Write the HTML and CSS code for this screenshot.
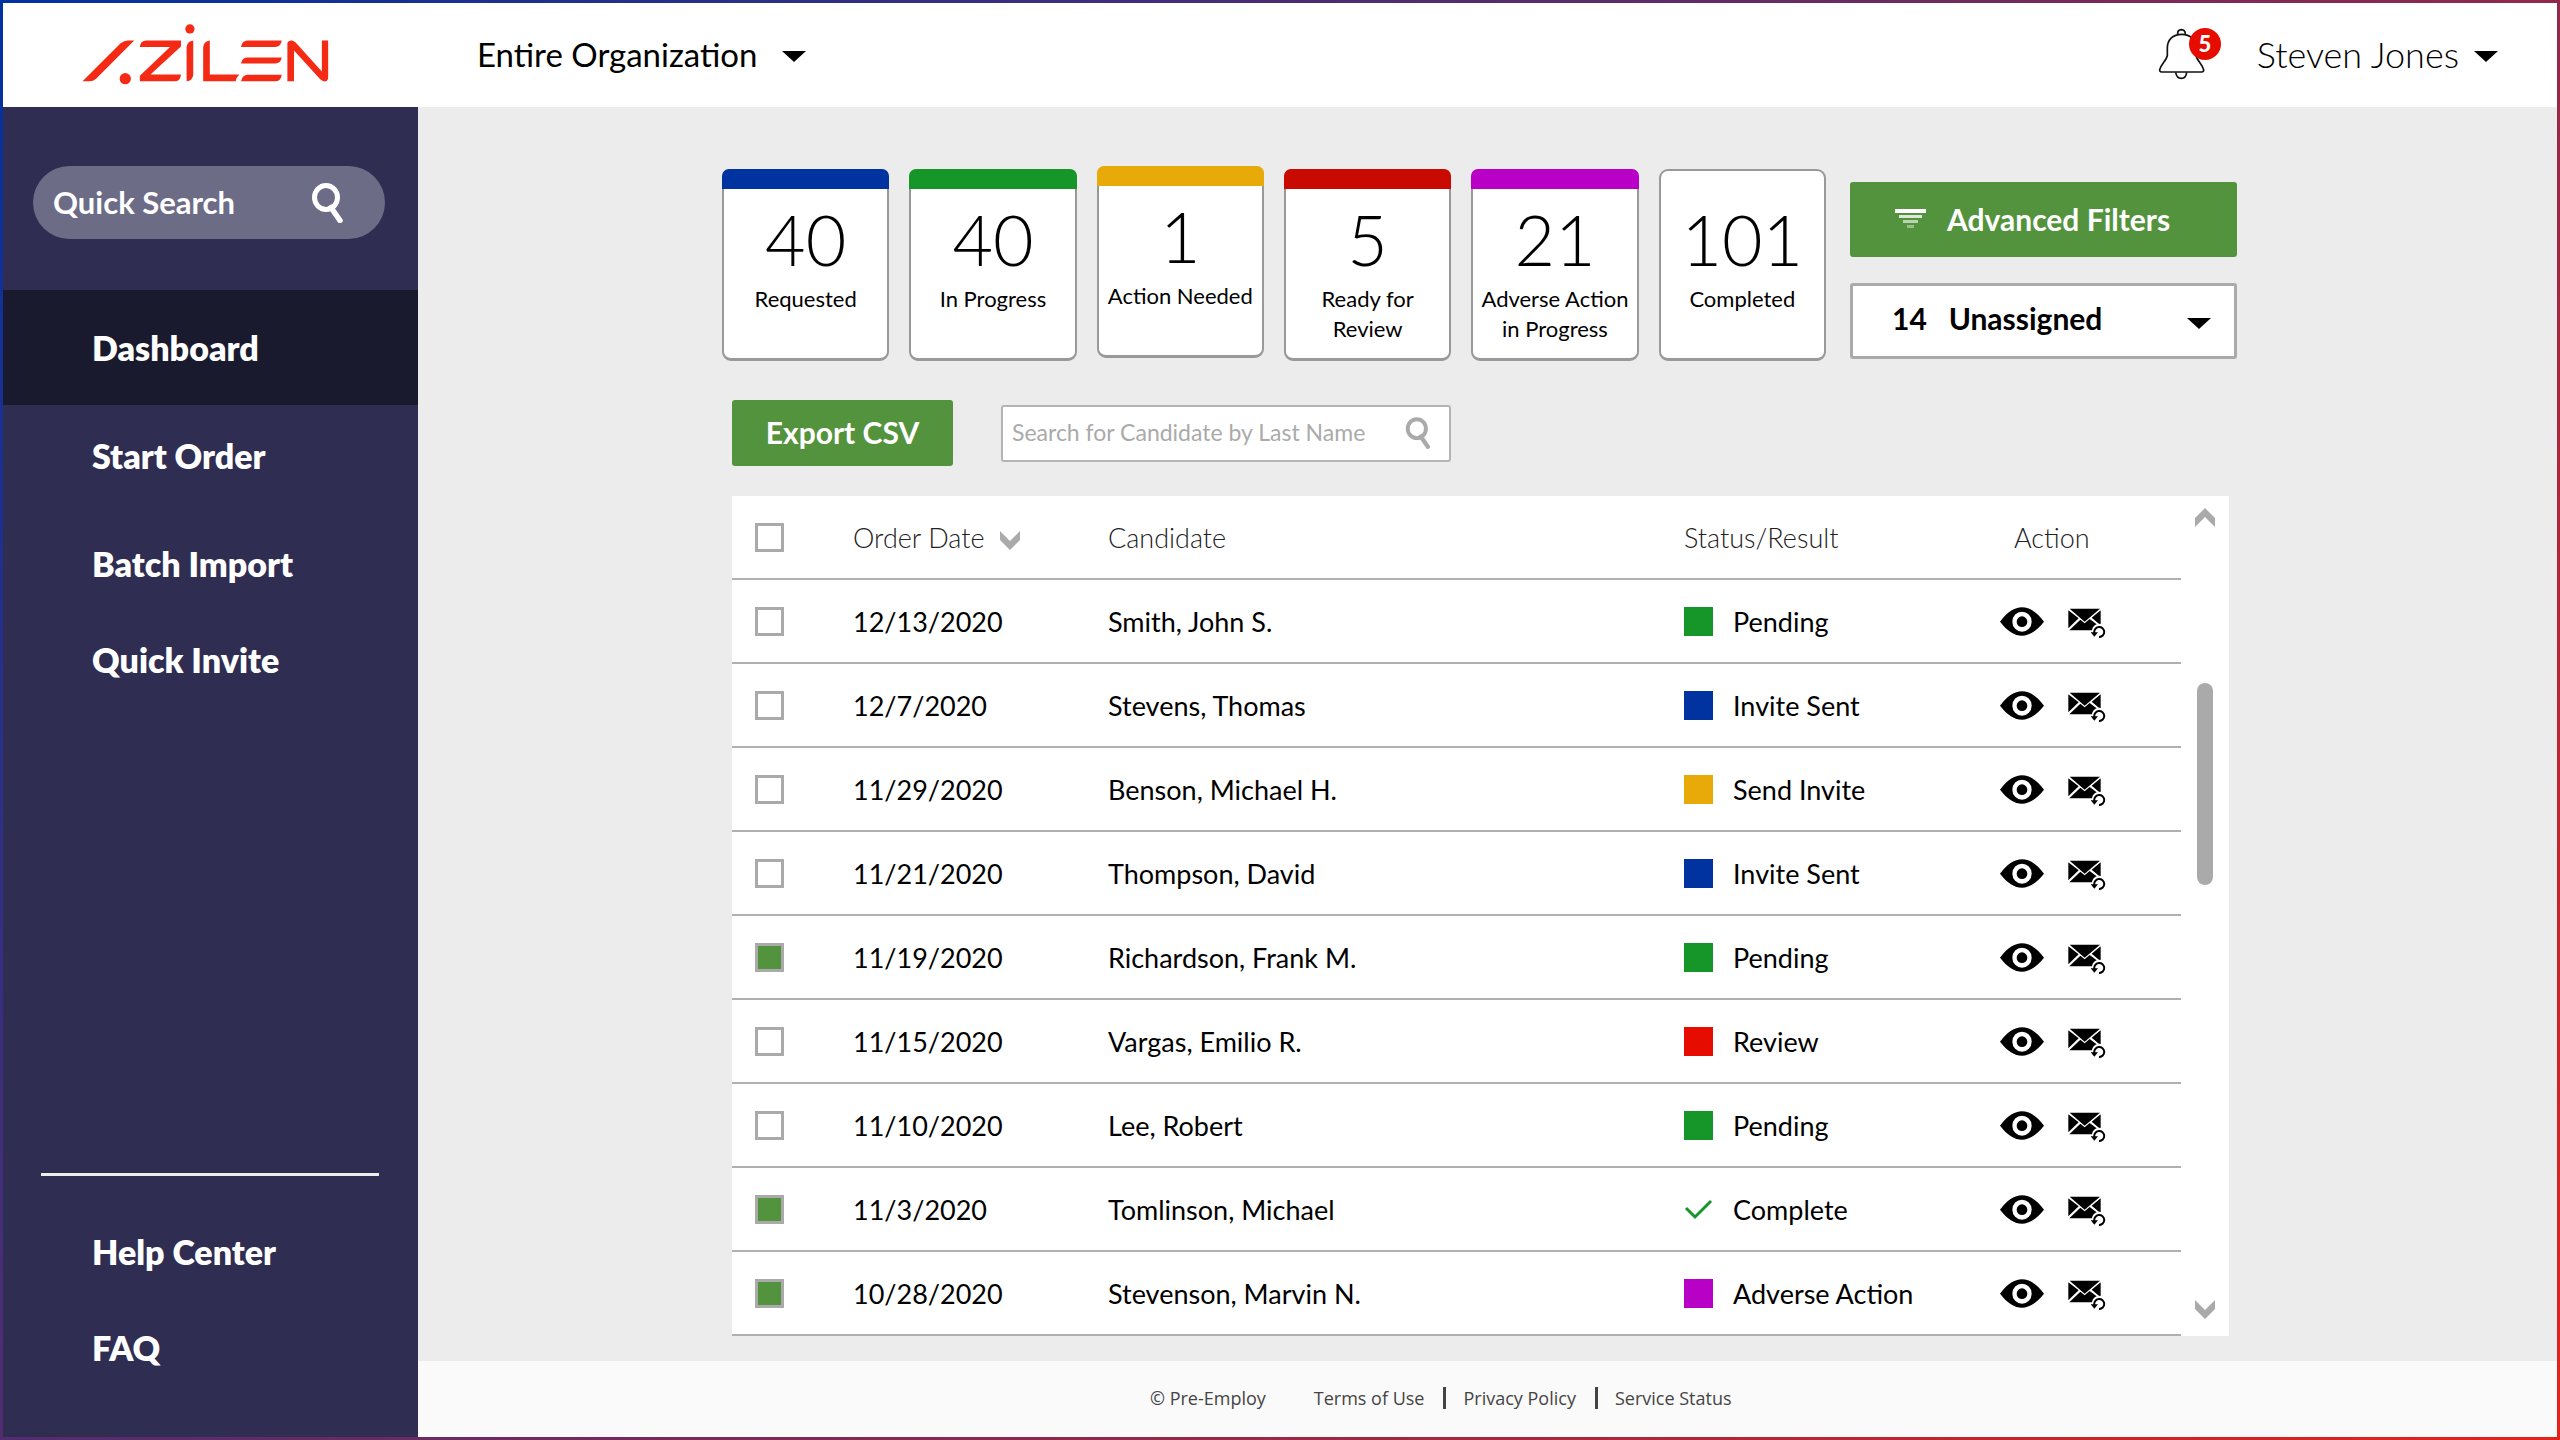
FILE: index.html
```
<!DOCTYPE html>
<html lang="en">
<head>
<meta charset="utf-8">
<meta name="viewport" content="width=device-width, initial-scale=1">
<title>Dashboard</title>
<link rel="stylesheet" href="styles.css">
</head>
<body>
<svg class="sprite" aria-hidden="true">
  <symbol id="caret" viewBox="0 0 24 11"><path d="M0 0h24L12 11z"/></symbol>
  <symbol id="chevron" viewBox="0 0 20 19"><path d="M0 0l10 10L20 0v9L10 19 0 9z"/></symbol>
  <symbol id="search" viewBox="0 0 33 40"><ellipse cx="15" cy="14.500" rx="11.500" ry="12" fill="none" stroke="currentColor" stroke-width="5"/><path d="M20 24.500l9 13" fill="none" stroke="currentColor" stroke-width="5.500" stroke-linecap="round"/></symbol>
  <symbol id="eye" viewBox="60 55 132 87"><path fill-rule="evenodd" d="M60 99C82 70 104 56 126 56s44 14 66 43c-22 28-44 42-66 42S82 127 60 99zM126 69a29 30 0 1 0 0 60 29 30 0 1 0 0-60z"/><circle cx="126" cy="99" r="16"/></symbol>
  <symbol id="resend" viewBox="264 52 117 102">
    <path d="M269 66h91l-46 39z"/>
    <path d="M265 71l31 24-31 30zM362 71v45l-27-23z"/>
    <path d="M268 131l33-32 13 11 15-13 24 18-14 16z"/>
    <circle cx="358" cy="134" r="23" fill="#fff"/>
    <path d="M343 139a15 15 0 1 1 14 12" fill="none" stroke="currentColor" stroke-width="6"/>
    <path d="M332 137h22l-11 13z"/>
  </symbol>
</svg>
<div class="app">
  <header class="topbar">
    <a class="brand" href="#" aria-label="Azilen">
      <svg viewBox="35 40 742 184" aria-hidden="true">
        <path d="M35 213L150 98q10-8 22-8h19L76 205q-9 8-20 8z"/>
        <circle cx="164" cy="205" r="17"/>
        <path d="M208 109q2-19 20-19h104v18L240 192h92q-2 21-20 21H208v-17L299 109z"/>
        <circle cx="359" cy="55" r="14"/>
        <path d="M349 213V110q2-18 20-20v103q-2 18-20 20z"/>
        <path d="M399 213V110q2-18 20-20v102h89q-9 8-11 21z"/>
        <path d="M513 109q4-19 20-19h103q-3 19-20 19zM513 159q4-18 20-18h103q-3 18-20 18zM513 213q4-20 20-20h103q-3 20-20 20z"/>
        <path d="M653 213V98q3-9 14-8 6 1 11 6l79 87V90h19v115q-3 9-13 8-6-1-11-6l-79-87v93z"/>
      </svg>
    </a>
    <div class="org">
      <select class="org-select" aria-label="Organization"><option>Entire Organization</option></select>
      <svg class="caret"><use href="#caret"/></svg>
    </div>
    <button class="bell" type="button" aria-label="Notifications">
      <svg viewBox="175 85 141 156" fill="none" stroke="#111" stroke-width="5" aria-hidden="true">
        <path d="M234 103q-1-12 11-13 12 1 12 13"/>
        <path d="M203 145c0-24 16-41 43-41s43 17 43 41v22c2 15 18 25 23 43q1 6-6 7H186q-7-1-6-7c5-18 21-28 23-43z"/>
        <path d="M228 218q3 18 17 18t16-18"/>
      </svg>
      <span class="badge">5</span>
    </button>
    <button class="user" type="button">Steven Jones <svg class="caret"><use href="#caret"/></svg></button>
  </header>

  <div class="shell">
    <aside class="sidebar">
      <label class="quick-search">
        <input type="search" placeholder="Quick Search" aria-label="Quick Search">
        <svg><use href="#search"/></svg>
      </label>
      <nav class="nav nav-main">
        <a class="active" href="#">Dashboard</a>
        <a href="#">Start Order</a>
        <a href="#">Batch Import</a>
        <a href="#">Quick Invite</a>
      </nav>
      <nav class="nav nav-help">
        <a href="#">Help Center</a>
        <a href="#">FAQ</a>
      </nav>
    </aside>

    <div class="page">
      <main class="content">
        <section class="summary">
          <ul class="cards">
            <li class="card blue"><strong>40</strong><span>Requested</span></li>
            <li class="card green"><strong>40</strong><span>In Progress</span></li>
            <li class="card amber selected"><strong>1</strong><span>Action Needed</span></li>
            <li class="card red"><strong>5</strong><span>Ready for Review</span></li>
            <li class="card purple"><strong>21</strong><span>Adverse Action in Progress</span></li>
            <li class="card"><strong>101</strong><span>Completed</span></li>
          </ul>
          <div class="filters">
            <button class="btn btn-filters" type="button">
              <svg viewBox="0 0 31 20" fill="#fff" aria-hidden="true"><path d="M0 0h31v4H0z"/><path d="M4 6h23v3H4z" opacity=".8"/><path d="M8 11h15v3H8z" opacity=".6"/><path d="M12 16h7v3h-7z" opacity=".4"/></svg>
              Advanced Filters
            </button>
            <div class="assign">
              <select aria-label="Assignment"><option>14&nbsp;&nbsp; Unassigned</option></select>
              <svg class="caret"><use href="#caret"/></svg>
            </div>
          </div>
        </section>

        <div class="toolbar">
          <button class="btn" type="button">Export CSV</button>
          <label class="find">
            <input type="search" placeholder="Search for Candidate by Last Name" aria-label="Search for Candidate by Last Name">
            <svg><use href="#search"/></svg>
          </label>
        </div>

        <section class="panel">
          <table class="orders">
            <colgroup><col class="c-check"><col class="c-date"><col><col class="c-status"><col class="c-action"></colgroup>
            <thead>
              <tr>
                <th><input type="checkbox" aria-label="Select all"></th>
                <th>Order Date <svg class="chevron"><use href="#chevron"/></svg></th>
                <th>Candidate</th>
                <th>Status/Result</th>
                <th class="th-action">Action</th>
              </tr>
            </thead>
            <tbody id="rows"></tbody>
          </table>
          <div class="rail">
            <svg class="chevron up"><use href="#chevron"/></svg>
            <div class="thumb"></div>
            <svg class="chevron down"><use href="#chevron"/></svg>
          </div>
        </section>
      </main>
      <footer class="footer">
        <span>© Pre-Employ</span>
        <nav>
          <a href="#">Terms of Use</a>
          <a href="#">Privacy Policy</a>
          <a href="#">Service Status</a>
        </nav>
      </footer>
    </div>
  </div>
</div>
<script src="orders.js"></script>
</body>
</html>
```
FILE: styles.css
```
* { box-sizing: border-box; }

body {
  margin: 0;
  font-family: Lato, "Liberation Sans", sans-serif;
  color: #000;
}

button, input, select { font: inherit; color: inherit; }
button, select { cursor: pointer; }
a { color: inherit; text-decoration: none; }
svg { display: block; flex: none; fill: currentColor; }
.sprite { position: absolute; width: 0; height: 0; }
.caret { width: 24px; height: 11px; margin-top: 4px; pointer-events: none; }
.chevron { width: 20px; height: 19px; color: #aaa; }

.app {
  min-height: 100vh;
  padding: 3px;
  display: flex;
  flex-direction: column;
  background: linear-gradient(135deg, #0032a0, #e3231b);
}

/* Top bar */
.topbar {
  display: flex;
  align-items: center;
  height: 104px;
  padding: 0 59px 2px 79px;
  background: #fff;
}
.brand { margin-right: 148px; color: #f52a15; }
.brand svg { width: 247px; height: 61px; }
.org { display: flex; align-items: center; gap: 24px; margin-right: auto; }
.org-select, .assign select {
  appearance: none;
  border: 0;
  padding: 0;
  background: none;
}
.org-select { font-size: 33px; }
.bell, .user { border: 0; padding: 0; background: none; }
.bell { position: relative; margin-right: 52px; }
.bell svg { width: 47px; height: 52px; fill: none; }
.badge {
  position: absolute;
  left: 31px;
  top: 0;
  width: 32px;
  height: 32px;
  border-radius: 50%;
  background: #e60c00;
  color: #fff;
  font-size: 22px;
  font-weight: 900;
  line-height: 32px;
}
.user { display: flex; align-items: center; gap: 15px; font-size: 36px; font-weight: 300; }

/* Sidebar */
.shell { flex: 1; display: flex; }
.sidebar {
  flex: none;
  width: 415px;
  padding: 59px 0 41px;
  display: flex;
  flex-direction: column;
  background: #2f2d52;
  color: #fff;
}
.quick-search {
  display: flex;
  align-items: center;
  height: 73px;
  margin: 0 33px 51px 30px;
  padding: 0 41px 0 20px;
  border-radius: 37px;
  background: #6d6c87;
}
.quick-search input, .find input {
  flex: 1;
  min-width: 0;
  border: 0;
  padding: 0 0 2px;
  outline: 0;
  background: none;
  appearance: none;
}
.quick-search input { font-size: 31px; font-weight: 700; }
.quick-search input::placeholder { color: #fff; }
.quick-search svg { width: 33px; height: 40px; }

.nav { display: flex; flex-direction: column; font-size: 34px; font-weight: 800; line-height: 96px; }
.nav a { padding-left: 89px; }
.nav .active { line-height: 115px; margin-bottom: 3px; background: #1a1a2e; }
.nav-main a:nth-child(2) { margin-bottom: 12px; }
.nav-help { margin-top: auto; }
.nav-help::before { content: ""; height: 3px; margin: 0 39px 28px 38px; background: #eee; }

/* Content */
.page { flex: 1; min-width: 0; display: flex; flex-direction: column; background: #ececec; }
.content { flex: 1; width: 100%; max-width: 1531px; margin: 0 auto; padding: 62px 16px 25px 0; }
.summary { display: grid; grid-template-columns: 1fr 387px; gap: 24px; }
.cards {
  display: grid;
  grid-template-columns: repeat(6, 1fr);
  gap: 20px;
  margin: 0;
  padding: 0;
  list-style: none;
}
.card {
  min-height: 192px;
  display: flex;
  flex-direction: column;
  border: 2px solid #999;
  border-bottom-width: 3px;
  border-radius: 9px;
  background: #fff;
  text-align: center;
}
.card::before {
  content: "";
  height: 20px;
  margin: -2px -2px 14px;
  border-radius: 7px 7px 0 0;
  background: var(--tone, transparent);
}
.card strong { margin-bottom: 9px; font-size: 70px; font-weight: 300; line-height: 72px; }
.card span { font-size: 22px; line-height: 30px; }
.selected { position: relative; top: -3px; }
.blue { --tone: #0032a0; }
.green { --tone: #169629; }
.amber { --tone: #e8aa09; }
.red { --tone: #c80a00; }
.alert { --tone: #e60c00; }
.purple { --tone: #b800c6; }

.btn {
  border: 0;
  border-radius: 3px;
  padding: 0 0 2px;
  background: #54933d;
  color: #fff;
  font-size: 30px;
  font-weight: 700;
}
.filters { display: flex; flex-direction: column; gap: 26px; padding-top: 13px; }
.btn-filters { height: 75px; padding-left: 45px; display: flex; align-items: center; gap: 21px; }
.btn-filters svg { width: 31px; height: 20px; fill: #fff; }
.assign {
  display: flex;
  align-items: center;
  height: 76px;
  padding-right: 23px;
  border: 3px solid #aaa;
  border-radius: 3px;
  background: #fff;
}
.assign select { flex: 1; height: 70px; padding: 0 0 6px 39px; font-size: 30px; font-weight: 700; }

.toolbar { display: flex; align-items: center; gap: 48px; padding-left: 10px; margin: 39px 0 30px; }
.toolbar .btn { width: 221px; height: 66px; }
.find {
  display: flex;
  align-items: center;
  width: 450px;
  height: 57px;
  padding: 0 18px 0 9px;
  border: 2px solid #b4b4b4;
  border-radius: 3px;
  background: #fff;
  color: #aaa;
}
.find input { font-size: 23px; }
.find input::placeholder { color: #aaa; }
.find svg { width: 26px; height: 32px; }

/* Orders table */
.panel { display: flex; margin: 0 8px 0 10px; background: #fff; }
.orders { flex: 1; table-layout: fixed; width: 100%; border-spacing: 0; font-size: 27px; }
.c-check { width: 121px; }
.c-date { width: 255px; }
.c-status { width: 316px; }
.c-action { width: 181px; }
.orders th, .orders td { height: 84px; padding: 0; border-bottom: 2px solid #b0b0b0; text-align: left; }
.orders th { font-weight: 300; color: #222; white-space: nowrap; }
.orders th .chevron { display: inline-block; vertical-align: middle; margin-left: 8px; }
.orders .th-action { padding-left: 14px; }
.orders input {
  appearance: none;
  display: block;
  width: 29px;
  height: 29px;
  margin: 0 0 0 23px;
  border: 3px solid #aaa;
  background: #fff;
}
.orders input:checked { background: #54933d; }
.status { display: flex; align-items: center; gap: 20px; }
.swatch { width: 29px; height: 29px; background: var(--tone); }
.tick { width: 29px; height: 21px; fill: none; stroke: #169629; stroke-width: 3; }
.actions { display: flex; align-items: center; gap: 24px; }
.actions button { border: 0; padding: 0; background: none; }
.eye { width: 44px; height: 29px; }
.resend { width: 39px; height: 34px; }

.rail { width: 48px; padding: 12px 0 17px; display: flex; flex-direction: column; align-items: center; }
.up { transform: rotate(180deg); }
.thumb { width: 16px; height: 202px; margin-top: 156px; border-radius: 8px; background: #aaa; }
.down { margin-top: auto; }

/* Footer */
.footer {
  display: flex;
  align-items: center;
  height: 76px;
  padding: 0 0 2px 732px;
  background: #fafafa;
  color: #444;
  font-family: "Open Sans", "Noto Sans", sans-serif;
  font-size: 18px;
}
.footer span { margin-right: 48px; }
.footer nav { display: flex; }
.footer a { line-height: 22px; }
.footer a + a { margin-left: 19px; padding-left: 17px; border-left: 3px solid #444; }

@media (max-width: 1900px) {
  .content { padding: 40px 24px 25px; }
  .summary { grid-template-columns: 1fr; }
  .footer { justify-content: center; padding-left: 0; }
}
```
FILE: orders.js
```
const orders = [
  ["12/13/2020", "Smith, John S.", "Pending", "green", false],
  ["12/7/2020", "Stevens, Thomas", "Invite Sent", "blue", false],
  ["11/29/2020", "Benson, Michael H.", "Send Invite", "amber", false],
  ["11/21/2020", "Thompson, David", "Invite Sent", "blue", false],
  ["11/19/2020", "Richardson, Frank M.", "Pending", "green", true],
  ["11/15/2020", "Vargas, Emilio R.", "Review", "alert", false],
  ["11/10/2020", "Lee, Robert", "Pending", "green", false],
  ["11/3/2020", "Tomlinson, Michael", "Complete", "", true],
  ["10/28/2020", "Stevenson, Marvin N.", "Adverse Action", "purple", true],
];

const tick = '<svg class="tick" viewBox="0 0 29 21"><path d="M2 9l9 9L27 2"/></svg>';

document.getElementById("rows").innerHTML = orders.map(([date, name, status, tone, checked]) => `
  <tr>
    <td><input type="checkbox" aria-label="Select ${name}"${checked ? " checked" : ""}></td>
    <td>${date}</td>
    <td>${name}</td>
    <td><div class="status">${tone ? `<span class="swatch ${tone}"></span>` : tick}${status}</div></td>
    <td><div class="actions">
      <button type="button" aria-label="View"><svg class="eye"><use href="#eye"/></svg></button>
      <button type="button" aria-label="Resend"><svg class="resend"><use href="#resend"/></svg></button>
    </div></td>
  </tr>`).join("");
```
